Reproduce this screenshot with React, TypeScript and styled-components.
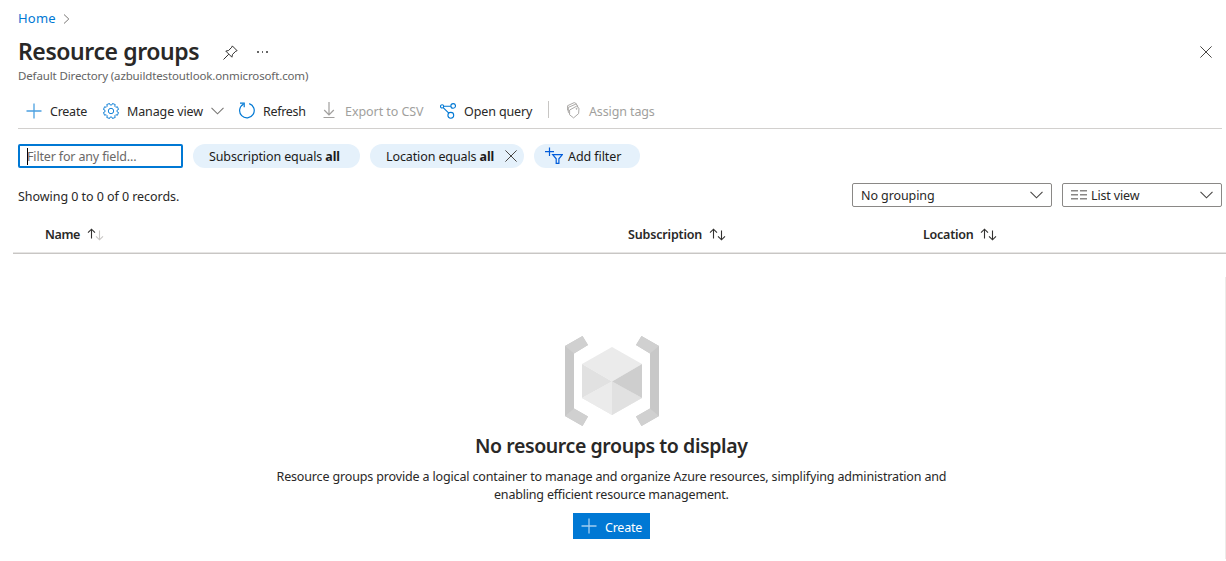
import React from 'react';
import styled, { createGlobalStyle } from 'styled-components';

const Global = createGlobalStyle`
  *, *::before, *::after { box-sizing: border-box; }
  body { margin: 0; background: #fff; overflow: hidden; }
  svg { display: block; flex: none; }
`;

const Page = styled.main`
  width: 1226px;
  height: 561px;
  display: flex;
  flex-direction: column;
  background: #fff;
  color: #292827;
  font: 400 12.5px/18px 'Noto Sans', 'Open Sans', sans-serif;
`;

const Label = styled.span<{ $w: number; $ls?: number; $drop?: number }>`
  flex: none;
  display: block;
  width: ${(p) => p.$w}px;
  padding-top: ${(p) => p.$drop ?? 2}px;
  letter-spacing: ${(p) => p.$ls ?? 0}px;
  white-space: nowrap;
`;

const Breadcrumb = styled.nav`
  height: 37px;
  padding: 0 18px;
  display: flex;
  align-items: center;
  gap: 7px;
  font-size: 13px;
  color: #0078d4;
  span { padding-bottom: 1px; }
`;

const TitleRow = styled.header`
  height: 29px;
  padding: 1px 14px 0 18px;
  display: flex;
  align-items: center;
`;

const Title = styled.h1`
  margin: 0 24px 0 0;
  padding-bottom: 2px;
  font-size: 23px;
  line-height: 28px;
  font-weight: 600;
`;

const Spacer = styled.div`
  flex: 1;
`;

const More = styled.div`
  display: flex;
  gap: 3px;
  margin-left: 19px;
  i { width: 1.5px; height: 1.5px; background: #666; }
`;

const Subtitle = styled.div`
  height: 20px;
  padding-left: 18px;
  font-size: 11.5px;
  line-height: 20px;
  color: #646464;
`;

const Toolbar = styled.div`
  height: 43px;
  margin: 0 4px 0 18px;
  padding: 7px 0 0 8px;
  display: flex;
  align-items: center;
  border-bottom: 1px solid #d2d0ce;
`;

const Command = styled.div<{ $gap: number; $after: number; $disabled?: boolean }>`
  display: flex;
  align-items: center;
  gap: ${(p) => p.$gap}px;
  margin-right: ${(p) => p.$after}px;
  color: ${(p) => (p.$disabled ? '#a19f9d' : '#292827')};
`;

const Divider = styled.div`
  width: 1px;
  height: 17px;
  margin: 0 18px 2px 0;
  background: #c8c6c4;
`;

const Filters = styled.div`
  display: flex;
  gap: 10px;
  padding: 15px 0 0 18px;
`;

const Search = styled.div`
  width: 165px;
  height: 24px;
  padding-left: 7px;
  display: flex;
  align-items: center;
  border: 2px solid #0078d4;
  border-radius: 2px;
  color: #6b6967;
`;

const Caret = styled.i`
  width: 1px;
  height: 17px;
  margin-right: -1px;
  background: #000;
`;

const Pill = styled.div<{ $w: number; $pad: number; $gap?: number }>`
  width: ${(p) => p.$w}px;
  height: 24px;
  padding-left: ${(p) => p.$pad}px;
  display: flex;
  align-items: center;
  gap: ${(p) => p.$gap ?? 0}px;
  border-radius: 12px;
  background: #e5f1fb;
  color: #1b1a19;
`;

const Summary = styled.div`
  height: 24px;
  margin: 15px 4px 0 18px;
  display: flex;
  align-items: center;
  gap: 10px;
`;

const Select = styled.div<{ $w: number }>`
  width: ${(p) => p.$w}px;
  height: 24px;
  padding: 0 8px;
  display: flex;
  align-items: center;
  gap: 4px;
  border: 1px solid #8a8886;
  border-radius: 2px;
`;

const TableHead = styled.div`
  height: 47px;
  margin-left: 13px;
  padding: 8px 0 0 32px;
  display: grid;
  grid-template-columns: 583px 295px 1fr;
  align-items: start;
  border-bottom: 1px solid #c8c6c4;
  box-shadow: inset 0 -1px #e6e5e4;
  font-weight: 600;
`;

const Column = styled.div`
  height: 37px;
  display: flex;
  align-items: center;
  gap: 7px;
  svg { margin-top: 2px; }
`;

const Empty = styled.section`
  height: 282px;
  margin-top: 23px;
  padding: 59px 2px 0 0;
  display: flex;
  flex-direction: column;
  align-items: center;
  border-right: 1px solid #edebe9;
`;

const EmptyTitle = styled.h2`
  margin: 6px 0 0;
  font-size: 19.5px;
  line-height: 28px;
  font-weight: 600;
`;

const EmptyText = styled.p`
  margin: 8px 0 0;
  display: flex;
  flex-direction: column;
  align-items: center;
`;

const Primary = styled.button`
  width: 77px;
  height: 26px;
  margin: 9px 0 0;
  padding: 0 0 0 8px;
  display: flex;
  align-items: center;
  gap: 8px;
  border: 0;
  background: #0078d4;
  color: #fff;
  font: inherit;
`;

const Plus = ({ color }: { color: string }) => (
  <svg width="16" height="16" viewBox="0 0 16 16" stroke={color} strokeWidth="1.3">
    <path d="M8 0.5V15.5M0.5 8H15.5" />
  </svg>
);

const Chevron = ({ w = 13, color = '#484644' }: { w?: number; color?: string }) => (
  <svg width={w} height="8" viewBox="0 0 13 8" fill="none" stroke={color} strokeWidth="1.1">
    <path d="M0.5 0.8L6.5 6.8L12.5 0.8" />
  </svg>
);

const Close = ({ size }: { size: number }) => (
  <svg width={size} height={size} viewBox="0 0 12 12" stroke="#484644" strokeWidth="1">
    <path d="M0.4 0.4L11.6 11.6M11.6 0.4L0.4 11.6" />
  </svg>
);

const gearPath = (() => {
  const pts: string[] = [];
  for (let i = 0; i < 8; i++) {
    const a = (i * Math.PI) / 4 + Math.PI / 8;
    [[-0.25, 6.1], [-0.2, 7.7], [0.2, 7.7], [0.25, 6.1]].forEach(([d, r]) => {
      pts.push(`${(8 + r * Math.sin(a + d)).toFixed(2)} ${(8 - r * Math.cos(a + d)).toFixed(2)}`);
    });
  }
  return `M${pts.join('L')}Z`;
})();

const Gear = () => (
  <svg width="16" height="16" viewBox="0 0 16 16" fill="none" stroke="#1683d8" strokeLinejoin="round">
    <path d={gearPath} />
    <circle cx="8" cy="8" r="2.7" />
  </svg>
);

const Refresh = () => (
  <svg width="16" height="17" viewBox="0 0 16 17" fill="none" stroke="#0078d4" strokeWidth="1.2">
    <path d="M10.2 1.6A7.3 7.3 0 1 1 4.3 2.2M1 1.1H5.2V5.3" />
  </svg>
);

const Download = () => (
  <svg width="12" height="17" viewBox="0 0 12 17" fill="none" stroke="#a19f9d" strokeWidth="1.2">
    <path d="M6 0V12.6M1.2 8L6 12.8L10.8 8M0.5 15.5H11.5" />
  </svg>
);

const Query = () => (
  <svg width="16" height="16" viewBox="0 0 16 16" fill="none" stroke="#0078d4" strokeWidth="1.1">
    <circle cx="2.1" cy="3.4" r="1.6" />
    <circle cx="13.2" cy="2.9" r="2.3" />
    <circle cx="10.8" cy="12.3" r="2.9" />
    <path d="M3.7 3.3H10.9M3.2 4.6L8.8 10.2" />
  </svg>
);

const Tags = () => (
  <svg width="13" height="17" viewBox="0 0 13 17" fill="none" stroke="#a19f9d" strokeWidth="0.9" strokeLinejoin="round">
    <path d="M2.6 8L9.6 4.2L12 6.2L11.6 11.6L6.6 15.9L2.6 12.8Z" />
    <path d="M2.6 11.6L1.3 10.4V5.4L8.4 2.3L10.6 3.4V5M1.3 8.8L0.6 8.2V3.7L7.2 0.6L9.4 1.7V2.8" />
    <circle cx="9.6" cy="6.8" r="0.5" />
  </svg>
);

const Pin = () => (
  <svg width="15" height="15" viewBox="0 0 15 15" fill="none" stroke="#323130" strokeWidth="1" strokeLinejoin="round">
    <path d="M9.3 0.9L14.1 5.7L12.8 6.2L9.5 9.4L8.9 12.2L2.8 6.1L5.6 5.5L8.8 2.2ZM5.8 9.2L0.5 14.5" />
  </svg>
);

const AddFilterIcon = () => (
  <svg width="18" height="18" viewBox="0 0 18 18" fill="none" stroke="#015cda" strokeWidth="1.2">
    <path d="M4.5 0.5V9M0 4.6H9M7.7 7.6H17.4L13.9 11.8V16.4H11.2V11.8Z" />
  </svg>
);

const ListIcon = () => (
  <svg width="16" height="11" viewBox="0 0 16 11" fill="#8a8886">
    {[0, 4, 8].map((y) => (
      <path key={y} d={`M0 ${y}h7v1.4h-7zM9 ${y}h7v1.4h-7z`} />
    ))}
  </svg>
);

const Sort = ({ faded }: { faded?: boolean }) => (
  <svg width="17" height="13" viewBox="0 0 17 13" fill="none" strokeWidth="1.1">
    <path d="M4.5 10.5V1M1 4.7L4.5 1.2L8 4.7" stroke="#323130" />
    <path d="M12.5 2.5V12M9 8.3L12.5 11.8L16 8.3" stroke={faded ? '#c8c6c4' : '#323130'} />
  </svg>
);

const ResourceGroupIcon = () => (
  <svg width="96" height="90" viewBox="0 0 96 90">
    <path d="M1 10L18.5 0L24 9L10 17.5V72.5L24 80.5L18.5 90L1 80Z" fill="#c8c8c8" />
    <path d="M95 10L77.5 0L72 9L86 17.5V72.5L72 80.5L77.5 90L95 80Z" fill="#c8c8c8" />
    <path d="M1 10L18.5 0L24 9L10 17.5ZM1 80L10 72.5L24 80.5L18.5 90ZM95 10L77.5 0L72 9L86 17.5ZM95 80L86 72.5L72 80.5L77.5 90Z" fill="#d0d0d0" />
    <path d="M48 11L78 28L48 45.5L18 28ZM48 45.5L78 62L48 79L18 62Z" fill="#ebebeb" />
    <path d="M18 28L48 45.5L18 62ZM48 45.5L78 62L48 79Z" fill="#e1e1e1" />
    <path d="M18 62L48 45.5V79Z" fill="#ebebeb" />
    <path d="M78 28V62L48 45.5Z" fill="#cecece" />
  </svg>
);

export default function App() {
  return (
    <Page>
      <Global />
      <Breadcrumb>
        <Label $w={38} $ls={0.2} $drop={0}>Home</Label>
        <svg width="7" height="10" viewBox="0 0 7 10" fill="none" stroke="#797775">
          <path d="M1 0.5L5.8 5L1 9.5" />
        </svg>
      </Breadcrumb>
      <TitleRow>
        <Title><Label $w={181} $ls={-0.42} $drop={0}>Resource groups</Label></Title>
        <Pin />
        <More><i /><i /><i /></More>
        <Spacer />
        <Close size={12} />
      </TitleRow>
      <Subtitle><Label $w={291} $ls={-0.13} $drop={0}>Default Directory (azbuildtestoutlook.onmicrosoft.com)</Label></Subtitle>
      <Toolbar>
        <Command $gap={8} $after={16}><Plus color="#4ba0e1" /><Label $w={37} $ls={-0.25}>Create</Label></Command>
        <Command $gap={8} $after={15}><Gear /><Label $w={76} $ls={-0.12}>Manage view</Label><Chevron color="#797775" /></Command>
        <Command $gap={8} $after={17}><Refresh /><Label $w={43} $ls={-0.3}>Refresh</Label></Command>
        <Command $gap={10} $after={16} $disabled><Download /><Label $w={79} $ls={-0.06}>Export to CSV</Label></Command>
        <Command $gap={8} $after={16}><Query /><Label $w={68} $ls={-0.12}>Open query</Label></Command>
        <Divider />
        <Command $gap={9} $after={0} $disabled><Tags /><Label $w={66} $ls={-0.12}>Assign tags</Label></Command>
      </Toolbar>
      <Filters>
        <Search><Caret /><Label $w={110} $ls={-0.16}>Filter for any field...</Label></Search>
        <Pill $w={167} $pad={16}><Label $w={131} $ls={-0.11}>Subscription equals <b>all</b></Label></Pill>
        <Pill $w={154} $pad={16}><Label $w={119} $ls={-0.11}>Location equals <b>all</b></Label><Close size={12} /></Pill>
        <Pill $w={106} $pad={11} $gap={5}><AddFilterIcon /><Label $w={60} $ls={-0.08}>Add filter</Label></Pill>
      </Filters>
      <Summary>
        <Label $w={161} $ls={-0.05} $drop={3}>Showing 0 to 0 of 0 records.</Label>
        <Spacer />
        <Select $w={200}><Label $w={75} $ls={-0.09}>No grouping</Label><Spacer /><Chevron /></Select>
        <Select $w={160}><ListIcon /><Label $w={50} $ls={-0.15}>List view</Label><Spacer /><Chevron /></Select>
      </Summary>
      <TableHead>
        <Column><Label $w={35} $ls={-0.37}>Name</Label><Sort faded /></Column>
        <Column><Label $w={74} $ls={-0.17}>Subscription</Label><Sort /></Column>
        <Column><Label $w={50} $ls={-0.25}>Location</Label><Sort /></Column>
      </TableHead>
      <Empty>
        <ResourceGroupIcon />
        <EmptyTitle><Label $w={273} $ls={-0.41} $drop={0}>No resource groups to display</Label></EmptyTitle>
        <EmptyText>
          <Label $w={670} $ls={-0.15} $drop={0}>Resource groups provide a logical container to manage and organize Azure resources, simplifying administration and</Label>
          <Label $w={235} $ls={-0.19} $drop={0}>enabling efficient resource management.</Label>
        </EmptyText>
        <Primary><Plus color="#a0cdf0" /><Label $w={37} $ls={-0.25} $drop={3}>Create</Label></Primary>
      </Empty>
    </Page>
  );
}
